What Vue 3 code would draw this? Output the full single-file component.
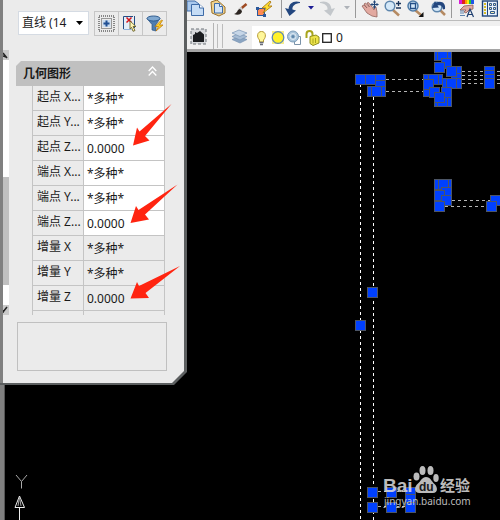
<script setup>
import { ref } from 'vue'

const selection = ref('line')
const layer = ref('0')

const rows = ref([
  { id: 'sx', label: '起点 X...', value: '*多种*' },
  { id: 'sy', label: '起点 Y...', value: '*多种*' },
  { id: 'sz', label: '起点 Z...', value: '0.0000' },
  { id: 'ex', label: '端点 X...', value: '*多种*' },
  { id: 'ey', label: '端点 Y...', value: '*多种*' },
  { id: 'ez', label: '端点 Z...', value: '0.0000' },
  { id: 'dx', label: '增量 X', value: '*多种*', locked: true },
  { id: 'dy', label: '增量 Y', value: '*多种*', locked: true },
  { id: 'dz', label: '增量 Z', value: '0.0000', locked: true },
  { id: 'len', label: '长度', value: '', locked: true }
])

// Top-left corners of the grips, in paint order
const grips = [
  [355, 74], [365, 74], [375, 74], [375, 80], [375, 86], [367, 86], [371, 86],
  [434, 50], [441, 50], [437, 50], [441, 58], [434, 62],
  [451, 66], [451, 73], [451, 78], [446, 66], [442, 78], [446, 78],
  [423, 74], [432, 74], [428, 74], [423, 86], [423, 79], [429, 87],
  [434, 96], [441, 96], [437, 96], [441, 87], [434, 92],
  [484, 66], [484, 70], [484, 74], [484, 78],
  [434, 179], [441, 179], [438, 179], [441, 187], [434, 190], [441, 195], [434, 201],
  [490, 195], [486, 201],
  [367, 287], [355, 320],
  [367, 487], [367, 502], [386, 487], [386, 502], [405, 487], [405, 494], [405, 502]
]

const walls = [[360, 84, 360, 520], [373, 97, 373, 520]]
const beams = [
  [386, 79, 423, 79], [386, 91, 423, 91],
  [462, 71, 484, 71], [462, 75, 484, 75], [462, 79, 484, 79], [462, 83, 484, 83],
  [497, 71, 500, 71], [497, 75, 500, 75], [497, 79, 500, 79], [497, 83, 500, 83],
  [452, 200, 490, 200], [445, 206, 486, 206],
  [378, 491, 405, 491], [378, 506, 405, 506]
]
</script>

<template>
  <div class="app">
    <svg class="drawing" width="500" height="520" viewBox="0 0 500 520" aria-label="绘图区">
      <path class="edge" d="M0 380h4v140h-4z" />
      <path class="edge-light" d="M4.500 380v140" />
      <g class="ucs">
        <path d="M16 475l5.500 6.500l5.500-6.500M21.500 481.500v7" />
        <path d="M19.500 520v-12" class="ucs-main" />
        <path d="M15 507.500h9.500L19.500 496z" class="ucs-main" />
        <path d="M18 506l1.500-9l1.500 9" />
      </g>
      <line v-for="(l, i) in walls" :key="'w' + i" class="wall" :x1="l[0] + 0.5" :y1="l[1]" :x2="l[2] + 0.5" :y2="l[3]" />
      <line v-for="(l, i) in beams" :key="'b' + i" class="beam" :x1="l[0]" :y1="l[1] + 0.5" :x2="l[2]" :y2="l[3] + 0.5" />
      <rect v-for="(g, i) in grips" :key="'g' + i" class="grip" :x="g[0] + 0.5" :y="g[1] + 0.5" width="10" height="10" />
      <g class="mark">
        <text x="383" y="492" class="mark-name">Bai</text>
        <ellipse cx="416.500" cy="476.500" rx="3" ry="4" />
        <ellipse cx="422.500" cy="470.500" rx="3" ry="4.500" />
        <ellipse cx="430.500" cy="470.500" rx="3" ry="4.500" />
        <ellipse cx="436" cy="478" rx="2.700" ry="4" />
        <path d="M426 477c-4 0-5 4-8 6.500c-4 3-4 9.500 1.500 9.500h13.500c5 0 5-6 1.500-9c-3-2.500-4-7-8.500-7z" />
        <text x="419" y="491" class="mark-du">du</text>
        <text x="440" y="491" class="mark-cn">经验</text>
        <text x="384" y="505" class="mark-url">jingyan.baidu.com</text>
      </g>
    </svg>

    <aside class="palette">
      <div class="face">
        <div class="rail">
          <i class="rail-end">
            <svg width="6" height="10" viewBox="0 0 6 10"><path d="M0 3l4 5M0 6l3 1" stroke="#222" stroke-width="1.500" /></svg>
          </i>
          <i class="thumb"></i>
          <i class="rail-end low">
            <svg width="6" height="10" viewBox="0 0 6 10"><path d="M0 7l4-5M0 5v3" stroke="#222" stroke-width="1.500" /></svg>
          </i>
        </div>
        <div class="body">
          <div class="picker">
            <div class="combo">
              <select v-model="selection" aria-label="对象类型">
                <option value="line">直线 (14</option>
              </select>
              <svg width="7" height="4" viewBox="0 0 7 4"><path d="M0 0h7L3.500 4z" /></svg>
            </div>
            <div class="tools">
              <button type="button" aria-label="切换 PICKADD">
                <svg width="17" height="17" viewBox="0 0 17 17" fill="none">
                  <rect x="1" y="1" width="15" height="15" stroke="#222" stroke-dasharray="1 1" />
                  <rect x="3.500" y="3.500" width="10" height="10" stroke="#444" stroke-dasharray="1 1" />
                  <rect x="4.500" y="5" width="8" height="7" fill="#c9dcf0" />
                  <path d="M8.500 5.500v6M5.500 8.500h6" stroke="#1f4f94" stroke-width="2" />
                </svg>
              </button>
              <button type="button" aria-label="选择对象">
                <svg width="17" height="17" viewBox="0 0 17 17" fill="none">
                  <rect x="2" y="2" width="9" height="12" fill="#e4eef9" />
                  <path d="M1.500 14V1.500H11M12.500 1v12" stroke="#244c84" />
                  <path d="M1.500 14.500h8" stroke="#8fb2dc" />
                  <path d="M4.500 2.500l5 5M9.500 2.500l-5 5" stroke="#d6151c" stroke-width="1.500" />
                  <path d="M8 6l6 5.500h-3l2 4l-2 .8l-1.500-4L8 14z" fill="#fff6b5" stroke="#5f571c" stroke-width=".8" />
                </svg>
              </button>
              <button type="button" aria-label="快速选择">
                <svg width="18" height="17" viewBox="0 0 18 17">
                  <path d="M1 3.500l5 6V15l4 1V9.500l4-6z" fill="#4e7daf" stroke="#2b5688" stroke-width=".7" />
                  <ellipse cx="7.500" cy="3.500" rx="6.500" ry="2.500" fill="#80a8d0" stroke="#315e91" />
                  <path d="M15.500 5L9 11.500h3.500L10 16l7-6h-3.500l3-4.500z" fill="#ffd320" stroke="#bd7a13" stroke-width=".8" />
                </svg>
              </button>
            </div>
          </div>

          <section class="group">
            <h2>
              几何图形
              <svg width="9" height="11" viewBox="0 0 9 11"><path d="M.7 5l3.800-4l3.800 4M.7 9.500l3.800-4l3.800 4" /></svg>
            </h2>
            <div class="clip">
              <table>
                <tbody>
                  <tr v-for="r in rows" :key="r.id">
                    <th scope="row"><label :for="r.id">{{ r.label }}</label></th>
                    <td :class="{ locked: r.locked }">
                      <input :id="r.id" v-model="r.value" type="text" :readonly="r.locked" />
                    </td>
                  </tr>
                </tbody>
              </table>
            </div>
          </section>
          <div class="hint"></div>
        </div>
      </div>
    </aside>

    <div class="bars">
      <div class="bar">
        <button type="button" aria-label="复制">
          <svg width="22" height="20" viewBox="0 0 22 20">
            <path d="M0 1h8l4 3v7H0z" fill="#a9c8ec" stroke="#416da8" />
            <path d="M4.500 4.500h8l4 3.500v7.500h-12z" fill="#c5dcf5" stroke="#3e6ba7" />
            <path d="M12.500 4.500V8h4" fill="#fff" stroke="#3e6ba7" />
          </svg>
        </button>
        <button type="button" aria-label="粘贴">
          <svg width="22" height="20" viewBox="0 0 22 20">
            <path d="M1 2l6-2l8 7v6l-6 3l-7-3z" fill="#f0d28d" stroke="#9b722c" />
            <path d="M4.500 3.500h5l3 3V13h-8z" fill="#d2e4f8" stroke="#3e6ba7" />
            <path d="M9.500 3.500v3h3" fill="#fff" stroke="#3e6ba7" />
          </svg>
        </button>
        <button type="button" aria-label="特性匹配">
          <svg width="22" height="20" viewBox="0 0 22 20">
            <path d="M13.500 4L7 9.500" stroke="#9e4a22" stroke-width="2.500" />
            <path d="M9 8L6 10" stroke="#ccc" stroke-width="3" />
            <path d="M7 9c-3 0-2 4-6 5c4 2 8 0 8-3z" fill="#2c2622" />
          </svg>
        </button>
        <button type="button" aria-label="块编辑器">
          <svg width="22" height="20" viewBox="0 0 22 20">
            <rect x="1.500" y="8.500" width="7" height="7" fill="#ff8a54" stroke="#2a579a" />
            <path d="M0 7h3v3H0zM7 14h3v3H7z" fill="#2a579a" />
            <path d="M14 1L6 8h4l-3 5l9-7h-4l3-4z" fill="#ffe02f" stroke="#ad7a14" stroke-width=".9" />
          </svg>
        </button>
        <i class="sep"></i>
        <button type="button" aria-label="放弃">
          <svg width="22" height="20" viewBox="0 0 22 20">
            <path d="M17 2C11 0 6 3 5.500 9L2 8l4.500 8L13 10.500l-3.500-1C9 6 12 3.500 17 3z" fill="#23477f" />
          </svg>
        </button>
        <button type="button" class="drop" aria-label="放弃列表">
          <svg width="11" height="20" viewBox="0 0 11 20"><path d="M2 6h6L5 9.500z" fill="#1c1c94" /></svg>
        </button>
        <button type="button" aria-label="重做">
          <svg width="22" height="20" viewBox="0 0 22 20">
            <path d="M2 2c6-2 11 1 11.500 7L17 8l-4.500 8L6 10.500l3.500-1C10 6 7 3.500 2 3z" fill="#c3c7cb" />
          </svg>
        </button>
        <button type="button" class="drop" aria-label="重做列表">
          <svg width="11" height="20" viewBox="0 0 11 20"><path d="M3 6h6L6 9.500z" fill="#aeb2b8" /></svg>
        </button>
        <i class="sep"></i>
        <button type="button" aria-label="实时平移">
          <svg width="22" height="20" viewBox="0 0 22 20">
            <path d="M5 6l2-1l3 3l-3-4l1.500-1l4 4l-2.500-4l1.500-.5l4 5l1.500 2.500V6l2 1l1 5v5l-5-1l-5-3z" fill="#e2a9a0" stroke="#93645e" stroke-width=".8" />
            <path d="M17.500 1v7M14 4.500h7" stroke="#244779" stroke-width="1.200" />
            <path d="M16 2.500L17.500 0L19 2.500zM16 6.500L17.500 9L19 6.500zM15.500 3L13 4.500L15.500 6zM19.500 3L22 4.500L19.500 6z" fill="#244779" />
          </svg>
        </button>
        <button type="button" aria-label="实时缩放">
          <svg width="22" height="20" viewBox="0 0 22 20" fill="none">
            <path d="M13 10l6 5.500" stroke="#b58a62" stroke-width="2.500" />
            <circle cx="10" cy="6" r="4.800" fill="#d4e8f8" stroke="#5e86ad" stroke-width="1.500" />
            <path d="M18.500 1v5M16 3.500h5M16 8h5" stroke="#1b365c" stroke-width="1.300" />
          </svg>
        </button>
        <button type="button" aria-label="窗口缩放">
          <svg width="22" height="20" viewBox="0 0 22 20" fill="none">
            <path d="M12 10l6 5" stroke="#b58a62" stroke-width="2.500" />
            <circle cx="10" cy="6" r="5" fill="#d4e8f8" stroke="#4e7aa6" stroke-width="1.500" />
            <path d="M7.500 3.500h5v5h-5z" stroke="#244f87" stroke-width="1.300" />
            <path d="M20.500 12v5h-5z" fill="#111" />
          </svg>
        </button>
        <button type="button" aria-label="缩放上一个">
          <svg width="22" height="20" viewBox="0 0 22 20" fill="none">
            <path d="M14 10l5 5" stroke="#b58a62" stroke-width="2.500" />
            <circle cx="11" cy="7" r="4.800" fill="#d4e8f8" stroke="#5e86ad" stroke-width="1.500" />
            <path d="M19 9c1-6-4-9-9-6L9 1L6 8l7-.5l-1.500-2c3-1 5 0 5.500 4z" fill="#23477f" />
          </svg>
        </button>
        <i class="sep"></i>
        <button type="button" aria-label="特性">
          <svg width="22" height="20" viewBox="0 0 22 20">
            <path d="M6 0h3v4H6z" fill="#d81bd8" /><path d="M9 0h3v4H9z" fill="#e02020" />
            <path d="M12 0h2v4h-2z" fill="#ff9a00" /><path d="M14 0h2v4h-2z" fill="#f4ec12" />
            <path d="M16 0h2v4h-2z" fill="#25c538" /><path d="M18 0h3v4h-3z" fill="#1d55e8" />
            <path d="M7 10l4-4l9-1v4l-4 1l-3 3l-2-1l2-2z" fill="#e2a9a0" stroke="#8a5b55" stroke-width=".8" />
            <path d="M7 11h4M7 13h4M7 15.500h5" stroke="#5e83ad" />
            <path d="M14 17l3-8l3.500 8M15 14.500h4" fill="none" stroke="#1f3f70" stroke-width="1.200" />
          </svg>
        </button>
        <button type="button" aria-label="设计中心">
          <svg width="22" height="20" viewBox="0 0 22 20" fill="none">
            <rect x="6.500" y="1" width="15" height="15" fill="#e9f2fb" stroke="#1f4478" stroke-width="1.400" />
            <path d="M9 3v12" stroke="#d7bd25" stroke-width="2" stroke-dasharray="2 1" />
            <path d="M11.500 1.500v14" stroke="#1f4478" />
            <g fill="#f8eeb0" stroke="#31598d"><path d="M13.500 3.500h2v2h-2zM17.500 3.500h2v2h-2zM13.500 7.500h2v2h-2zM17.500 7.500h2v2h-2zM14.500 11.500h4v2h-4z" /></g>
          </svg>
        </button>
      </div>

      <div class="bar second">
        <div class="block-tool">
          <button type="button" aria-label="工作空间">
            <svg width="17" height="17" viewBox="0 0 17 17">
              <rect x="1" y="1" width="15" height="15" fill="#d7d9dc" stroke="#6d7379" stroke-dasharray="3 2" />
              <path d="M3 14V7l2-1V4l2 1l3-2l4 3.500V14z" fill="#1b1d20" />
            </svg>
          </button>
        </div>
        <div class="grabber"></div>
        <button type="button" class="layers" aria-label="图层特性管理器">
          <svg width="17" height="15" viewBox="0 0 17 15" stroke="#7894b3" stroke-width=".7">
            <path d="M1 10.500l7-3l8 3l-7 3.500z" fill="#8ba5c2" />
            <path d="M1 7.500l7-3l8 3l-7 3.500z" fill="#a7bdd5" />
            <path d="M1 4l7-3l8 3l-7 3.500z" fill="#c6d6e7" />
          </svg>
        </button>
        <div class="layer-box">
          <svg width="66" height="18" viewBox="0 0 66 18" fill="none">
            <path d="M3.500 11C.5 8 1 2.500 5.500 2.500S10.500 8 7.500 11v2h-4z" fill="#fff79a" stroke="#b79b35" />
            <path d="M3.500 13.500h4M4 15.500h3" stroke="#686c78" stroke-width="1.500" />
            <path d="M16 2h12v13H16z" fill="#f7ee8a" />
            <circle cx="22" cy="8.500" r="5.800" fill="#fff229" stroke="#5c87b5" stroke-width="1.300" />
            <path d="M38.500 7.500h6v8h-6z" fill="#fff" stroke="#7b93a9" />
            <circle cx="37" cy="7.500" r="5.500" fill="#a9c4da" stroke="#7f9fba" />
            <circle cx="37" cy="7.500" r="3" stroke="#dfeaf3" />
            <circle cx="37" cy="7.500" r="1.500" fill="#5e86aa" />
            <path d="M50.500 9V5c0-4 6-4 6 0v3" stroke="#a8a51d" stroke-width="2" />
            <path d="M54 7.500l6-1.500l3 2v6l-6 2.500l-3-2z" fill="#ece34a" stroke="#8f8d20" />
            <path d="M57 9.500v5M59.500 9v5" stroke="#a8a51d" />
          </svg>
          <svg width="10" height="10" viewBox="0 0 10 10" fill="#fff"><rect x=".7" y=".7" width="8.600" height="8.600" stroke="#222" stroke-width="1.300" /></svg>
          <select v-model="layer" aria-label="图层">
            <option>0</option>
          </select>
        </div>
      </div>
    </div>

    <svg class="arrows" width="190" height="310" viewBox="0 0 190 310">
      <path d="M171.500 104L145 136l4.500 4.500L133 145.500l4-18l2.500 4z" />
      <path d="M177.500 184.500L145 214.500l4 5L130.500 223l5.500-17l2.500 4z" />
      <path d="M180 266L145.500 293l3.500 5l-18.500.5l6.500-16.500l2 4z" />
    </svg>
  </div>
</template>

<style>
body {
  margin: 0;
  background: #000;
}
</style>

<style scoped>
.app {
  position: relative;
  display: flex;
  align-items: flex-start;
  min-height: 100vh;
  overflow: hidden;
  background: #000;
  font: 12px/16px "Noto Sans", "Noto Sans CJK SC", sans-serif;
  color: #1a1a1a;
}
.drawing,
.arrows {
  position: absolute;
  left: 0;
  top: 0;
}
.arrows {
  fill: #ff2410;
  pointer-events: none;
}
.edge { fill: #808080; }
.edge-light { stroke: #555; }
.ucs { fill: none; stroke: #aaa; }
.ucs-main { stroke: #eee; }
.wall { stroke: #fff; stroke-dasharray: 3 3; }
.beam { stroke: #b4b4b4; stroke-width: 1; stroke-dasharray: 3 3; }
.grip { fill: #0040ff; stroke: #4c5566; }
.mark { fill: #dcdcdc; opacity: 0.85; }
.mark-name { font: bold 19px "Liberation Sans", sans-serif; }
.mark-du { font: bold 12px "Liberation Sans", sans-serif; fill: #222; }
.mark-cn { font: bold 15px "Noto Sans CJK SC", sans-serif; }
.mark-url { font: 10px "Noto Sans", sans-serif; }

button {
  display: flex;
  align-items: center;
  justify-content: center;
  padding: 0;
  border: 0;
  background: none;
}
select,
input {
  appearance: none;
  box-sizing: border-box;
  width: 100%;
  margin: 0;
  padding: 0;
  border: 0;
  background: none;
  color: inherit;
  font: inherit;
}

.palette {
  position: relative;
  flex: none;
  padding: 0 3px 2px 0;
  background: #5c5f60;
  clip-path: polygon(0 0, 100% 0, 100% calc(100% - 13px), calc(100% - 13px) 100%, 0 100%);
}
.face {
  display: flex;
  background: #ebebeb;
  border-left: 3px solid #808080;
  clip-path: polygon(0 0, 100% 0, 100% calc(100% - 12px), calc(100% - 12px) 100%, 0 100%);
}
.rail {
  display: flex;
  flex-direction: column;
  width: 6px;
  margin: 50px 0 68px;
  background: #fff;
}
.rail-end {
  display: flex;
  height: 10px;
  background: #c9c9c9;
}
.thumb {
  flex: 1;
  margin: 117px 0 20px;
  background: #c0c0c0;
}
.body {
  padding: 11px 17px 12px 7px;
}
.picker {
  display: flex;
  gap: 5px;
  padding-left: 2px;
}
.combo {
  display: flex;
  align-items: center;
  box-sizing: border-box;
  width: 71px;
  height: 24px;
  padding: 0 5px 0 3px;
  background: #fff;
  border: 1px solid #d5dbe3;
}
.combo select { flex: 1; min-width: 0; height: 22px; }
.combo svg { flex: none; }
.tools {
  display: flex;
  border: 1px solid #c6c6c6;
}
.tools button {
  width: 23px;
  height: 23px;
}
.tools button + button {
  width: 24px;
  border-left: 1px solid #c6c6c6;
}

.group {
  width: 149px;
  margin-top: 25px;
}
.group h2 {
  display: flex;
  align-items: center;
  justify-content: space-between;
  height: 25px;
  margin: 0;
  padding: 0 8px 0 7px;
  background: #c0c0c0;
  clip-path: polygon(5px 0, calc(100% - 5px) 0, 100% 5px, 100% 100%, 0 100%, 0 5px);
  font-size: 12px;
  font-weight: bold;
  line-height: 20px;
}
.group h2 svg { margin-bottom: 4px; fill: none; stroke: #fff; stroke-width: 1.300; }
.clip {
  height: 229px;
  margin-left: 16px;
  overflow: hidden;
}
table {
  width: 100%;
  table-layout: fixed;
  border-spacing: 0;
  border-left: 1px solid #c4c4c4;
}
th,
td {
  box-sizing: border-box;
  height: 25px;
  padding: 0;
  border-right: 1px solid #c4c4c4;
  border-bottom: 1px solid #c4c4c4;
}
th {
  width: 51px;
  padding: 3px 0 0 4px;
  font-weight: normal;
  text-align: left;
  vertical-align: top;
  white-space: nowrap;
}
th label { display: block; }
td { background: #fff; }
td.locked { background: #ebebeb; }
td input {
  display: block;
  height: 24px;
  padding: 0 0 0 3px;
}
.hint {
  height: 47px;
  margin: 7px 0 0 1px;
  border: 1px solid #c0c0c0;
}

.bars {
  position: relative;
  flex: 1;
  min-width: 0;
  background: #f0f0f0;
  border-bottom: 3px solid #a5a5a5;
}
.bar {
  display: flex;
  gap: 1px;
  height: 20px;
  overflow: hidden;
}
.bar button { flex: none; width: 22px; }
.bar .drop { width: 11px; }
.sep {
  flex: none;
  box-sizing: border-box;
  width: 3px;
  height: 18px;
  border-right: 1px solid #999;
}
.second {
  align-items: stretch;
  gap: 0;
  height: 26px;
  border-top: 1px solid #bcbcbc;
  padding-top: 2px;
}
.block-tool {
  display: flex;
  align-items: center;
  border-right: 1px solid #b4b4b4;
  padding-right: 4px;
}
.grabber {
  width: 4px;
  margin: 1px 3px;
  border: solid #bcbcbc;
  border-width: 0 1px;
}
.second .layers { margin: 0 2px; }
.layer-box {
  display: flex;
  flex: 1;
  align-items: center;
  min-width: 0;
  margin-top: 3px;
  padding-left: 4px;
  background: #fff;
}
.layer-box svg { flex: none; }
.layer-box select {
  flex: 1;
  min-width: 0;
  margin-left: 4px;
}
</style>
